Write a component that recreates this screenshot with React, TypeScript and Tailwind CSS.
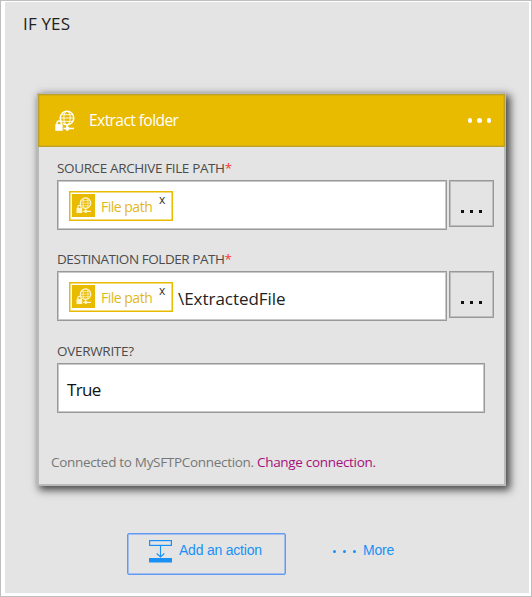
import React from "react";

function GlobeLock({ className }: { className: string }) {
  return (
    <svg viewBox="0 0 20 22" className={className} fill="none" stroke="currentColor">
      <circle cx="12" cy="8" r="6.8" strokeWidth="1.5" />
      <ellipse cx="12" cy="8" rx="3.2" ry="6.8" strokeWidth="0.9" />
      <path d="M5.3 8h13.4M6.5 4.7h11M6.5 11.3h11" strokeWidth="0.9" />
      <path d="M12 15v5.8M8.5 18.5h10.5" strokeWidth="1.6" />
      <circle cx="12.5" cy="18.5" r="2" fill="currentColor" stroke="none" />
      <rect x="1" y="12" width="6.6" height="8.8" fill="#e8ba00" stroke="none" />
      <path d="M2 15v-1.8a2.1 2.3 0 0 1 4.2 0V15" strokeWidth="1.5" />
      <rect x="0.3" y="14.2" width="7.4" height="6.6" fill="currentColor" stroke="none" />
    </svg>
  );
}

function Token() {
  return (
    <span className="mt-px flex h-[30px] w-[104px] shrink-0 items-center border-[1.5px] border-[#e8ba00] bg-white pl-[2px] text-[#e3b71a] shadow-[inset_0_0_0_0.5px_#e8ba00]">
      <span className="flex size-[23px] shrink-0 items-center justify-center bg-[#e8ba00] text-[#fff6d0]">
        <GlobeLock className="h-[17px] w-[16px]" />
      </span>
      <span className="ml-[6px] mt-[3px] w-[51px] whitespace-nowrap text-[14px] leading-5 tracking-[-0.5px]">File path</span>
      <span className="mb-[12px] ml-[7px] text-[12px] leading-3 text-[#333]">x</span>
    </span>
  );
}

function Label({ children, required, className }: { children: string; required?: boolean; className: string }) {
  return (
    <div className={"whitespace-nowrap text-[13.5px] leading-[18px] text-[#4c4c4c] " + className}>
      {children}
      {required && <span className="text-[#f33]">*</span>}
    </div>
  );
}

function PathField({ suffix }: { suffix?: string }) {
  return (
    <div className="flex gap-[2px]">
      <div className="flex h-[50px] w-[390px] items-center border border-[#999] bg-white pl-[11px] shadow-[inset_0_0_0_1px_#c8c8c8]">
        <Token />
        {suffix && <span className="ml-[5px] mt-[5px] text-[17px] tracking-[-0.04px] text-[#222]">{suffix}</span>}
      </div>
      <button className="flex h-[47px] w-[45px] items-end justify-center gap-[6px] border border-[#999] pb-[13px] pr-px shadow-[inset_0_0_0_1px_#bdbdbd]">
        <i className="size-[3px] bg-[#111]" />
        <i className="size-[3px] bg-[#111]" />
        <i className="size-[3px] bg-[#111]" />
      </button>
    </div>
  );
}

export default function App() {
  return (
    <main className="h-[597px] w-[532px] border border-[#bebebe] bg-white pl-1 pt-px font-['Open_Sans',sans-serif]">
      <div className="h-[591px] w-[524px] bg-[#e4e4e4] pl-[32px] pt-[11px]">
        <h1 className="-ml-[14px] h-[80px] whitespace-nowrap text-[17px] leading-[22px] tracking-[0.15px] text-[#222]">IF YES</h1>
        <section className="h-[393px] w-[469px] border-2 border-t border-[#b9baba] bg-[#e4e4e4] shadow-[3px_3px_8px_1px_#444]">
          <header className="-mx-px flex h-[53px] items-center border border-[#bda02a] bg-[#e8ba00] pl-[16px] pr-[13px] text-white shadow-[inset_0_0_0_0.5px_#c8a520]">
            <GlobeLock className="h-[22px] w-[20px]" />
            <h2 className="ml-[14px] whitespace-nowrap text-[15.6px] tracking-[-0.6px]">Extract folder</h2>
            <span className="ml-auto flex gap-[5px]">
              <i className="size-[4.5px] rounded-full bg-white" />
              <i className="size-[4.5px] rounded-full bg-white" />
              <i className="size-[4.5px] rounded-full bg-white" />
            </span>
          </header>
          <div className="pl-[18px] pt-[12px]">
            <Label required className="mb-[3px] tracking-[-0.37px]">SOURCE ARCHIVE FILE PATH</Label>
            <PathField />
            <Label required className="mb-[3px] mt-[20px] tracking-[-0.44px]">DESTINATION FOLDER PATH</Label>
            <PathField suffix="\ExtractedFile" />
            <Label className="mb-[3px] mt-[21px] tracking-[-0.3px]">OVERWRITE?</Label>
            <div className="flex h-[50px] w-[428px] items-center border border-[#999] bg-white pl-[9px] pt-1 text-[17px] tracking-[-0.7px] text-[#111] shadow-[inset_0_0_0_1px_#c8c8c8]">True</div>
          </div>
          <p className="ml-[12px] mt-[39px] whitespace-nowrap text-[13.5px] leading-5 tracking-[-0.31px] text-[#777]">
            Connected to MySFTPConnection. <a className="text-[#a4107c]">Change connection.</a>
          </p>
        </section>
        <div className="ml-[90px] mt-[47px] flex items-start font-['Liberation_Sans',Arial,sans-serif] text-[14px] text-[#1a90f5]">
          <button className="flex h-[42px] w-[159px] rounded-[2px] border-[1.5px] border-[#6099f6] pl-[21px] pt-[6px] shadow-[inset_0_0_0_0.5px_#6099f6]">
            <svg viewBox="0 0 23 23" className="size-[23px]" fill="none" stroke="currentColor">
              <rect x="0.6" y="0.6" width="21.8" height="4.8" strokeWidth="1.2" />
              <path d="M11.5 5.5v11M7.7 13.5l3.8 3.5 3.8-3.5" strokeWidth="1.1" />
              <rect y="18" width="23" height="4.5" fill="currentColor" stroke="none" />
            </svg>
            <span className="ml-[7px] whitespace-nowrap leading-5 tracking-[-0.22px]">Add an action</span>
          </button>
          <button className="ml-[47px] mt-[7px] flex items-center whitespace-nowrap leading-5 tracking-[-0.2px]">
            <span className="mr-[7px] mt-[2px] flex gap-[7px]">
              <i className="size-[3px] rounded-full bg-current" />
              <i className="size-[3px] rounded-full bg-current" />
              <i className="size-[3px] rounded-full bg-current" />
            </span>
            More
          </button>
        </div>
      </div>
    </main>
  );
}
